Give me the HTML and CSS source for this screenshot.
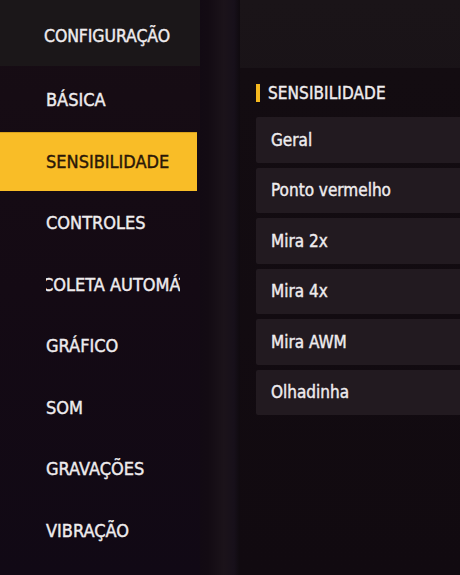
FILE: index.html
```html
<!DOCTYPE html>
<html lang="pt">
<head>
<meta charset="utf-8">
<link rel="stylesheet" href="styles.css">
</head>
<body>
<div class="screen">
  <aside class="sidebar">
    <div class="side-head"><span>CONFIGURAÇÃO</span></div>
    <ul class="menu">
      <li class="item"><span class="label">BÁSICA</span></li>
      <li class="item active"><span class="label">SENSIBILIDADE</span></li>
      <li class="item"><span class="label">CONTROLES</span></li>
      <li class="item"><span class="label clip"><span class="scroll">COLETA AUTOMÁTICA</span></span></li>
      <li class="item"><span class="label">GRÁFICO</span></li>
      <li class="item"><span class="label">SOM</span></li>
      <li class="item"><span class="label">GRAVAÇÕES</span></li>
      <li class="item"><span class="label">VIBRAÇÃO</span></li>
    </ul>
  </aside>
  <div class="divider"></div>
  <main class="content">
    <section class="panel">
      <h2 class="panel-title"><span class="bar"></span>SENSIBILIDADE</h2>
      <div class="rows">
        <div class="row">Geral</div>
        <div class="row">Ponto vermelho</div>
        <div class="row">Mira 2x</div>
        <div class="row">Mira 4x</div>
        <div class="row">Mira AWM</div>
        <div class="row">Olhadinha</div>
      </div>
    </section>
  </main>
</div>
</body>
</html>
```
FILE: styles.css
```css
* { box-sizing: border-box; }
html, body { margin: 0; padding: 0; }
body {
  width: 460px;
  height: 575px;
  overflow: hidden;
  background: #120a12;
  font-family: "DejaVu Sans", "Liberation Sans", sans-serif;
  font-stretch: condensed;
  color: #efecee;
  -webkit-text-stroke: 0.4px currentColor;
}
.screen {
  display: flex;
  width: 460px;
  height: 575px;
}
.sidebar {
  width: 200px;
  flex: none;
  background: linear-gradient(180deg, #170d14 0%, #140a14 50%, #110915 100%);
  display: flex;
  flex-direction: column;
}
.side-head {
  height: 66px;
  background: #1b1719;
  display: flex;
  align-items: center;
  padding-left: 44px;
  padding-top: 6px;
  font-size: 17.5px;
  letter-spacing: -0.1px;
}
.menu {
  list-style: none;
  margin: 0;
  padding: 4px 0 0 0;
  display: flex;
  flex-direction: column;
  gap: 2.5px;
}
.item {
  height: 59px;
  width: 197px;
  display: flex;
  align-items: center;
  padding-left: 46px;
  font-size: 18px;
  letter-spacing: 0;
}
.item.active {
  background: #f9bd27;
  border-top: 1px solid #d9a21c;
  color: #2a1708;
}
.label.clip {
  display: block;
  width: 134px;
  overflow: hidden;
  white-space: nowrap;
}
.scroll {
  display: inline-block;
  margin-left: -4px;
}
.divider {
  width: 40px;
  flex: none;
  background: linear-gradient(90deg, #120a13 0%, #130b13 20%, #1b131a 60%, #17101a 85%, #0f0a0f 100%);
}
.content {
  flex: 1;
  display: flex;
  flex-direction: column;
  background: linear-gradient(180deg, #1a1418 0%, #140e13 100%);
  padding-top: 68px;
  min-width: 0;
}
.panel {
  flex: 1;
  background: linear-gradient(180deg, #130c11 0%, #110a10 100%);
  padding-left: 16px;
}
.panel-title {
  margin: 0;
  height: 49px;
  display: flex;
  align-items: center;
  gap: 8px;
  font-size: 17px;
  font-weight: normal;
  letter-spacing: 0.1px;
}
.bar {
  width: 4px;
  height: 18px;
  background: #f5b81f;
}
.rows {
  display: flex;
  flex-direction: column;
  gap: 5px;
}
.row {
  height: 45.5px;
  background: #221a20;
  border-radius: 2px 0 0 2px;
  display: flex;
  align-items: center;
  padding-left: 15px;
  font-size: 17px;
}
```
